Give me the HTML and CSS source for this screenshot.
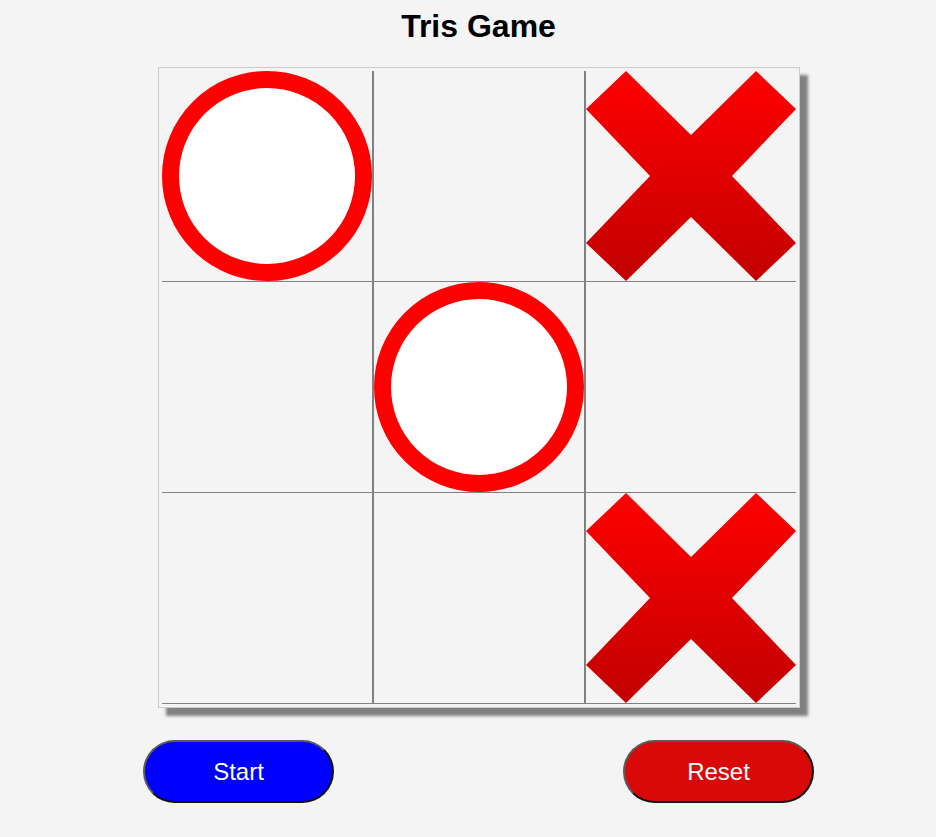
FILE: index.html
```html
<!DOCTYPE html>
<html lang="en">
<head>
<meta charset="utf-8">
<title>Tris Game</title>
<link rel="stylesheet" href="styles.css">
</head>
<body>
<svg class="defs" width="0" height="0" aria-hidden="true">
  <defs>
    <linearGradient id="xgrad" x1="0" y1="0" x2="0" y2="1">
      <stop offset="0" stop-color="#ff0000"/>
      <stop offset="1" stop-color="#c20000"/>
    </linearGradient>
  </defs>
</svg>
<div class="page">
  <h1 class="title">Tris Game</h1>
  <div class="board">
    <div class="cell"><div class="mark-o"></div></div>
    <div class="cell col"></div>
    <div class="cell col">
      <svg class="mark-x" viewBox="0 0 210 210"><polygon fill="url(#xgrad)" points="40,0 105,64 170,0 210,38 146,105 210,172 170,210 105,146 40,210 0,172 64,105 0,38"/></svg>
    </div>
    <div class="cell"></div>
    <div class="cell col"><div class="mark-o"></div></div>
    <div class="cell col"></div>
    <div class="cell"></div>
    <div class="cell col"></div>
    <div class="cell col">
      <svg class="mark-x" viewBox="0 0 210 210"><polygon fill="url(#xgrad)" points="40,0 105,64 170,0 210,38 146,105 210,172 170,210 105,146 40,210 0,172 64,105 0,38"/></svg>
    </div>
  </div>
  <div class="controls">
    <button class="btn btn-start">Start</button>
    <button class="btn btn-reset">Reset</button>
  </div>
</div>
</body>
</html>
```
FILE: styles.css
```css
html, body {
  margin: 0;
  padding: 0;
  background: #f4f4f4;
}

.defs {
  position: absolute;
  width: 0;
  height: 0;
}

.page {
  padding: 8px 0 0 21px;
  display: flex;
  flex-direction: column;
  align-items: center;
}

.title {
  margin: 0;
  font-family: "Comic Sans MS", "Liberation Sans", sans-serif;
  font-weight: bold;
  font-size: 32px;
  line-height: 36px;
  color: #000;
}

.board {
  margin-top: 23px;
  display: grid;
  grid-template-columns: 210px 212px 212px;
  padding: 3px;
  border: 1px solid #cccccc;
  background: #f4f4f4;
  box-shadow: 8px 8px 3px #808080;
}

.cell {
  height: 210px;
  border-bottom: 1px solid #808080;
  display: flex;
  align-items: center;
  justify-content: center;
}

.cell.col {
  border-left: 2px solid #808080;
}

.mark-o {
  box-sizing: border-box;
  width: 210px;
  height: 210px;
  border-radius: 50%;
  border: 17px solid #ff0000;
  background: #ffffff;
}

.mark-x {
  display: block;
  width: 210px;
  height: 210px;
}

.controls {
  width: 671px;
  margin-top: 32px;
  display: flex;
  justify-content: space-between;
}

.btn {
  box-sizing: border-box;
  width: 191px;
  height: 63px;
  border-radius: 32px;
  border: 2px solid;
  border-color: #5a5a5a #111111 #111111 #5a5a5a;
  font-family: "Liberation Sans", Arial, sans-serif;
  font-size: 24px;
  color: #ffffff;
  padding: 0;
  cursor: pointer;
}

.btn-start {
  background: #0000ff;
}

.btn-reset {
  background: #d90909;
}
```
